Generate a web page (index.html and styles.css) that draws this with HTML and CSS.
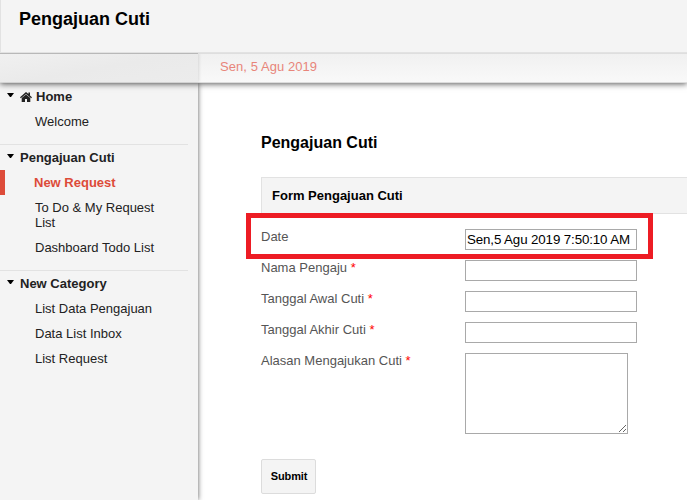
FILE: index.html
```html
<!DOCTYPE html>
<html lang="id">
<head>
<meta charset="utf-8">
<title>Pengajuan Cuti</title>
<link rel="stylesheet" href="styles.css">
</head>
<body>
<header class="header"><h1>Pengajuan Cuti</h1></header>
<div class="topbar"><div class="topbar-side"></div><div class="topbar-date">Sen, 5 Agu 2019</div></div>
<div class="layout">
  <nav class="sidebar">
    <section class="group">
      <h3><i class="caret"></i><svg class="home" viewBox="0 0 12 10"><path d="M6 0 0 5.200l.8 1L6 1.900l5.200 4.300.8-1-2-1.700V.6H8.400v1.500z"/><path d="M6 2.500 1.700 6.100V10H5V7h2v3h3.300V6.100z"/></svg>Home</h3>
      <a>Welcome</a>
    </section>
    <section class="group">
      <h3><i class="caret"></i>Pengajuan Cuti</h3>
      <a class="active">New Request</a>
      <a>To Do &amp; My Request List</a>
      <a>Dashboard Todo List</a>
    </section>
    <section class="group">
      <h3><i class="caret"></i>New Category</h3>
      <a>List Data Pengajuan</a>
      <a>Data List Inbox</a>
      <a>List Request</a>
    </section>
  </nav>
  <main class="content">
    <h2>Pengajuan Cuti</h2>
    <form class="form">
      <div class="section-title">Form Pengajuan Cuti</div>
      <div class="row marked"><label>Date</label><input type="text" value="Sen,5 Agu 2019 7:50:10 AM"></div>
      <div class="row"><label>Nama Pengaju <b>*</b></label><input type="text"></div>
      <div class="row"><label>Tanggal Awal Cuti <b>*</b></label><input type="text"></div>
      <div class="row"><label>Tanggal Akhir Cuti <b>*</b></label><input type="text"></div>
      <div class="row"><label>Alasan Mengajukan Cuti <b>*</b></label><textarea></textarea></div>
      <button class="submit" type="button">Submit</button>
    </form>
  </main>
</div>
</body>
</html>
```
FILE: styles.css
```css
* { box-sizing: border-box; }
body {
  margin: 0;
  height: 500px;
  overflow: hidden;
  background: #fff;
  font: 13px/15px "Liberation Sans", Arial, sans-serif;
  color: #222;
}
h1, h2, h3 { margin: 0; }
.header {
  position: relative;
  z-index: 2;
  height: 53px;
  padding: 9px 0 0 18px;
  background: #f4f4f4;
  border-left: 1px solid #e2e2e2;
  border-bottom: 1px solid #e2e2e2;
}
.header h1 { font-size: 18px; line-height: 20px; color: #000; }
.topbar {
  position: relative;
  z-index: 1;
  display: flex;
  height: 30px;
  border-bottom: 1px solid #dcdcdc;
  box-shadow: 0 1px 6px rgba(0, 0, 0, .65);
  background: linear-gradient(#f0f0f0, #f9f9f9);
}
.topbar-side {
  width: 198px;
  background: linear-gradient(170deg, #f0f0f0, #eaeaea 50%, #ececec);
  border-top: 1px solid #b8b8b8;
  box-shadow: 1px 0 3px rgba(0, 0, 0, .12);
}
.topbar-date {
  flex: 1;
  padding: 6px 0 0 22px;
  border-top: 1px solid #dedede;
  line-height: 14px;
  letter-spacing: .06px;
  color: #e8857a;
}
.layout { display: flex; height: 417px; }
.sidebar {
  width: 198px;
  flex: none;
  padding-top: 1px;
  background: #f4f4f4;
  box-shadow: 0 0 5px rgba(0, 0, 0, .65);
}
.group {
  width: 188px;
  padding-bottom: 10px;
  border-bottom: 1px solid #e2e2e2;
}
.group:last-child { border-bottom: 0; }
.group h3 {
  display: flex;
  align-items: center;
  height: 25px;
  padding-left: 7px;
  font-size: 13px;
}
.caret {
  width: 7px;
  margin: 0 6px 3px 0;
  border: solid transparent;
  border-width: 4px 3.5px 0;
  border-top-color: #000;
}
.home { width: 12px; height: 10px; margin-right: 4px; fill: #222; }
.group a { display: block; padding: 5px 20px 5px 35px; }
.group .active {
  padding-left: 29px;
  border-left: 5px solid #dd4b39;
  color: #dd4b39;
  font-weight: bold;
}
.content { flex: 1; padding: 50px 0 0 63px; }
.content h2 { height: 44px; font-size: 16px; line-height: 20px; color: #000; }
.section-title {
  height: 37px;
  padding: 10px;
  border: 1px solid #e2e2e2;
  border-right: 0;
  background: #f4f4f4;
  color: #000;
  font-weight: bold;
}
.row { display: flex; align-items: flex-start; margin-bottom: 10px; }
.row label { width: 204px; color: #555; }
.row b { color: #f00; font-weight: normal; }
.row input, .row textarea {
  width: 172px;
  height: 21px;
  padding: 1px;
  border: 1px solid #a9a9a9;
  border-radius: 0;
  background: #fff;
  font: 13.33px "Liberation Sans", Arial, sans-serif;
  letter-spacing: -.12px;
  color: #000;
}
.row textarea { width: 163px; height: 81px; }
.marked {
  position: relative;
  width: 407px;
  height: 46px;
  margin: -1px 0 1px -15px;
  padding: 11px 0 0 10px;
  border: 5px solid #ed1c24;
}
.submit {
  display: block;
  width: 55px;
  height: 35px;
  margin-top: 25px;
  padding: 0 0 1px 1px;
  border: 1px solid #dcdcdc;
  border-radius: 2px;
  background: #f4f4f4;
  font: bold 11px "Liberation Sans", Arial, sans-serif;
  letter-spacing: -.1px;
  color: #000;
}
```
